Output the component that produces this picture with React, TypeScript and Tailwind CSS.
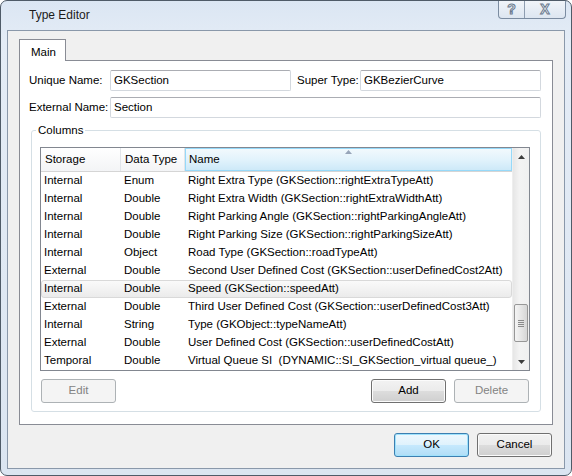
import React from "react"

type Row = {
  storage: string
  type: string
  name: string
  selected?: boolean
}

const rows: Row[] = [
  { storage: "Internal", type: "Enum", name: "Right Extra Type (GKSection::rightExtraTypeAtt)" },
  { storage: "Internal", type: "Double", name: "Right Extra Width (GKSection::rightExtraWidthAtt)" },
  { storage: "Internal", type: "Double", name: "Right Parking Angle (GKSection::rightParkingAngleAtt)" },
  { storage: "Internal", type: "Double", name: "Right Parking Size (GKSection::rightParkingSizeAtt)" },
  { storage: "Internal", type: "Object", name: "Road Type (GKSection::roadTypeAtt)" },
  { storage: "External", type: "Double", name: "Second User Defined Cost (GKSection::userDefinedCost2Att)" },
  { storage: "Internal", type: "Double", name: "Speed (GKSection::speedAtt)", selected: true },
  { storage: "External", type: "Double", name: "Third User Defined Cost (GKSection::userDefinedCost3Att)" },
  { storage: "Internal", type: "String", name: "Type (GKObject::typeNameAtt)" },
  { storage: "External", type: "Double", name: "User Defined Cost (GKSection::userDefinedCostAtt)" },
  { storage: "Temporal", type: "Double", name: "Virtual Queue SI  (DYNAMIC::SI_GKSection_virtual queue_)" },
]

function Button({ label, disabled, primary }: { label: string; disabled?: boolean; primary?: boolean }) {
  if (disabled) {
    return (
      <button className="w-[75px] h-[24px] rounded-[3px] border border-[#adb2b5] bg-[#f4f4f4] text-[#838383] flex items-center justify-center">
        {label}
      </button>
    )
  }
  if (primary) {
    return (
      <button className="w-[75px] h-[24px] rounded-[3px] border border-[#3c7fb1] bg-[linear-gradient(#eef8fe_0%,#dff2fc_50%,#c6e9fd_50%,#b0ddf6_100%)] shadow-[inset_0_0_0_1px_#9fe2fc] text-black flex items-center justify-center">
        {label}
      </button>
    )
  }
  return (
    <button className="w-[75px] h-[24px] rounded-[3px] border border-[#707070] bg-[linear-gradient(#f2f2f2_0%,#ebebeb_50%,#dddddd_50%,#cfcfcf_100%)] shadow-[inset_0_0_0_1px_#fbfbfb] text-black flex items-center justify-center">
      {label}
    </button>
  )
}

function TextBox({ value, width }: { value: string; width: string }) {
  return (
    <div
      className={`${width} h-[21px] rounded-[2px] border border-[#d3d8de] border-t-[#abadb3] bg-white pl-[3px] flex items-center`}
    >
      {value}
    </div>
  )
}

function Triangle({ up, color }: { up?: boolean; color: string }) {
  return (
    <svg width="7" height="4" viewBox="0 0 7 4">
      {up ? <path d="M0 4 L3.5 0 L7 4 Z" fill={color} /> : <path d="M0 0 L3.5 4 L7 0 Z" fill={color} />}
    </svg>
  )
}

export default function App() {
  return (
    <div
      className="w-[572px] h-[476px] rounded-[7px] border border-[#4f5b68] bg-[linear-gradient(#dbe6f3,#e4ecf6_40px,#dbe5f1)] flex flex-col text-[11.5px] text-black overflow-hidden"
      style={{ fontFamily: '"Liberation Sans", Arial, sans-serif' }}
    >
      {/* title bar */}
      <div className="h-[29px] flex justify-between pl-[28px] pr-[5px]">
        <div className="pt-[5px] text-[12px] text-[#1b1b1b]">Type Editor</div>
        <div className="-mt-px h-[19px] w-[68px] flex rounded-b-[4px] border border-t-0 border-[#7b8ca1] bg-[linear-gradient(#f1f5fa,#dde6f1)]">
          <div className="w-[26px] border-r border-[#8e9db0] flex items-center justify-center">
            <span className="text-[14px] font-bold text-[#f4f7fb] [-webkit-text-stroke:1px_#6a7a8e] leading-none">?</span>
          </div>
          <div className="flex-1 flex items-center justify-center">
            <span className="text-[14px] font-bold text-[#f4f7fb] [-webkit-text-stroke:1px_#6a7a8e] leading-none">X</span>
          </div>
        </div>
      </div>

      {/* client area */}
      <div className="mx-[6px] h-[439px] border border-[#8a98aa] bg-[#f0f0f0] flex flex-col">
        <div className="ml-[11px] mt-[8px] flex">
          <div className="relative z-10 -mb-px w-[47px] h-[22px] border border-b-0 border-[#898c95] bg-white pl-[11px] pt-[4px]">
            Main
          </div>
        </div>

        {/* tab page */}
        <div className="ml-[11px] w-[534px] h-[365px] border border-[#898c95] bg-white flex flex-col">
          <div className="mt-[9px] pl-[9px] flex items-center">
            <div className="w-[81px]">Unique Name:</div>
            <TextBox value="GKSection" width="w-[181px]" />
            <div className="ml-[6px] w-[63px]">Super Type:</div>
            <TextBox value="GKBezierCurve" width="w-[181px]" />
          </div>
          <div className="mt-[6px] pl-[9px] flex items-center">
            <div className="w-[81px]">External Name:</div>
            <TextBox value="Section" width="w-[431px]" />
          </div>

          {/* group box */}
          <div className="relative ml-[11px] mt-[12px] w-[510px] h-[282px] rounded-[3px] border border-[#d5dfe5] flex flex-col">
            <div className="absolute left-[4px] -top-[8px] bg-white px-[2px] leading-[14px]">Columns</div>

            <div className="mt-[16px] ml-[8px] w-[490px] h-[224px] border border-[#828790] bg-white flex">
              <div className="w-[471px] flex flex-col">
                {/* header */}
                <div className="h-[24px] flex border-b border-[#d5d5d5] bg-[linear-gradient(#ffffff,#f3f4f6)]">
                  <div className="w-[80px] pl-[4px] flex items-center border-r border-[#e1e5ea]">Storage</div>
                  <div className="w-[64px] pl-[4px] flex items-center border-r border-[#e1e5ea]">Data Type</div>
                  <div className="relative flex-1 pl-[3px] flex items-center border border-[#96d9f9] bg-[linear-gradient(#f2f9fd,#e2f3fc_50%,#cde9f8)]">
                    Name
                    <div className="absolute left-[159px] top-[1px] flex">
                      <Triangle up color="#97a5b9" />
                    </div>
                  </div>
                </div>
                {/* rows */}
                {rows.map((r, i) => (
                  <div
                    key={i}
                    className={`h-[18px] flex items-center whitespace-pre ${
                      r.selected
                        ? "rounded-[3px] border border-[#d9d9d9] bg-[linear-gradient(#fafafa,#ebebeb)]"
                        : "border border-transparent"
                    }`}
                  >
                    <div className="w-[79px] pl-[2px]">{r.storage}</div>
                    <div className="w-[64px] pl-[3px]">{r.type}</div>
                    <div className="flex-1 pl-[3px]">{r.name}</div>
                  </div>
                ))}
              </div>

              {/* scrollbar */}
              <div className="w-[17px] flex flex-col bg-[linear-gradient(90deg,#e6e6e6,#f3f3f3_40%,#f0f0f0)] border-l border-[#eeeeee]">
                <div className="h-[17px] flex items-center justify-center">
                  <Triangle up color="#3d3d3d" />
                </div>
                <div className="h-[139px]" />
                <div className="mx-[1px] h-[38px] rounded-[2px] border border-[#979797] bg-[linear-gradient(90deg,#f4f4f4,#e6e6e6_50%,#d6d6d6)] flex flex-col items-center justify-center gap-[1px]">
                  <div className="w-[6px] h-px bg-[#8a8a8a]" />
                  <div className="w-[6px] h-px bg-[#8a8a8a]" />
                  <div className="w-[6px] h-px bg-[#8a8a8a]" />
                  <div className="w-[6px] h-px bg-[#8a8a8a]" />
                </div>
                <div className="flex-1" />
                <div className="h-[17px] flex items-center justify-center">
                  <Triangle color="#3d3d3d" />
                </div>
              </div>
            </div>

            <div className="mt-[8px] ml-[9px] w-[488px] flex justify-between">
              <Button label="Edit" disabled />
              <div className="flex gap-[8px]">
                <Button label="Add" />
                <Button label="Delete" disabled />
              </div>
            </div>
          </div>
        </div>

        <div className="mt-[8px] pr-[12px] flex justify-end gap-[8px]">
          <Button label="OK" primary />
          <Button label="Cancel" />
        </div>
      </div>
    </div>
  )
}
